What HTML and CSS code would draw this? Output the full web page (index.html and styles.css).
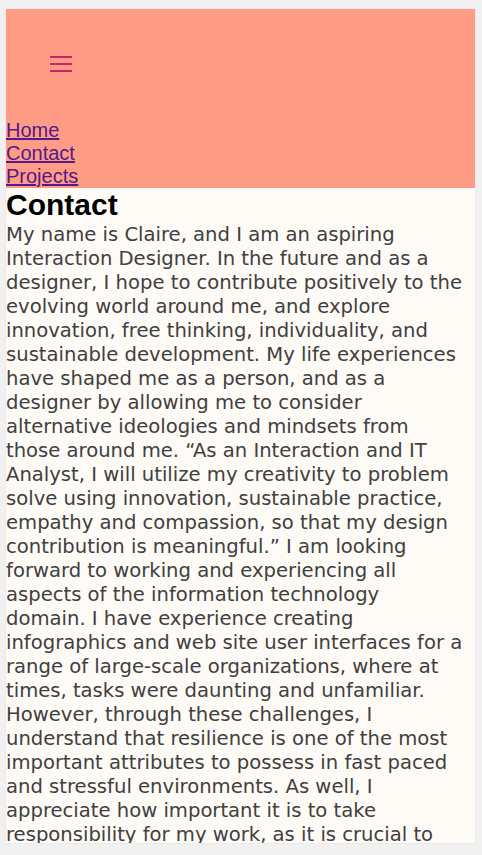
FILE: index.html
```html
<!DOCTYPE html>
<html lang="en">
<head>
<meta charset="utf-8">
<title>Contact</title>
<link rel="stylesheet" href="styles.css">
</head>
<body>
<div class="frame">
  <header class="site-header">
    <div class="toggler-row">
      <button class="toggler" aria-label="Menu">
        <svg width="22" height="16" viewBox="0 0 22 16"><path d="M0 1h22M0 8h22M0 15h22" stroke="#c9216a" stroke-width="2"/></svg>
      </button>
    </div>
    <nav class="nav">
      <a href="#">Home</a>
      <a href="#">Contact</a>
      <a href="#">Projects</a>
    </nav>
  </header>
  <main class="content">
    <h1 class="title">Contact</h1>
    <p class="bio">My name is Claire, and I am an aspiring<br>
Interaction Designer. In the future and as a<br>
designer, I hope to contribute positively to the<br>
evolving world around me, and explore<br>
innovation, free thinking, individuality, and<br>
sustainable development. My life experiences<br>
have shaped me as a person, and as a<br>
designer by allowing me to consider<br>
alternative ideologies and mindsets from<br>
those around me. “As an Interaction and IT<br>
Analyst, I will utilize my creativity to problem<br>
solve using innovation, sustainable practice,<br>
empathy and compassion, so that my design<br>
contribution is meaningful.” I am looking<br>
forward to working and experiencing all<br>
aspects of the information technology<br>
domain. I have experience creating<br>
infographics and web site user interfaces for a<br>
range of large-scale organizations, where at<br>
times, tasks were daunting and unfamiliar.<br>
However, through these challenges, I<br>
understand that resilience is one of the most<br>
important attributes to possess in fast paced<br>
and stressful environments. As well, I<br>
appreciate how important it is to take<br>
responsibility for my work, as it is crucial to<br>
the success of any team and any project that<br>
I am a part of.</p>
  </main>
</div>
</body>
</html>
```
FILE: styles.css
```css
html, body {
  margin: 0;
  padding: 0;
}
body {
  background: #f1f1f1;
  height: 855px;
  overflow: hidden;
}
.frame {
  margin: 9px 0 0 6px;
  width: 469px;
  height: 834px;
  overflow: hidden;
  background: #fefaf5;
  box-shadow: 0 0 1px rgba(0,0,0,0.15);
}
.site-header {
  background: #ff9c86;
  display: flex;
  flex-direction: column;
}
.toggler-row {
  height: 110px;
  display: flex;
  align-items: center;
  padding-left: 44px;
}
.toggler {
  border: 0;
  background: transparent;
  padding: 0;
  margin: 0;
  display: flex;
}
.nav {
  display: flex;
  flex-direction: column;
  font-family: "Liberation Sans", Arial, sans-serif;
  font-size: 20px;
  line-height: 23px;
}
.nav a {
  color: #551a8b;
  text-decoration: underline;
  align-self: flex-start;
}
.content {
  color: #333333;
}
.title {
  margin: 0;
  font-family: "Liberation Sans", Arial, sans-serif;
  font-size: 30px;
  font-weight: bold;
  line-height: 34px;
  color: #000;
}
.bio {
  margin: 0;
  padding-top: 1px;
  font-family: "DejaVu Sans", sans-serif;
  font-size: 19.6px;
  line-height: 24px;
  color: #404040;
}
```
